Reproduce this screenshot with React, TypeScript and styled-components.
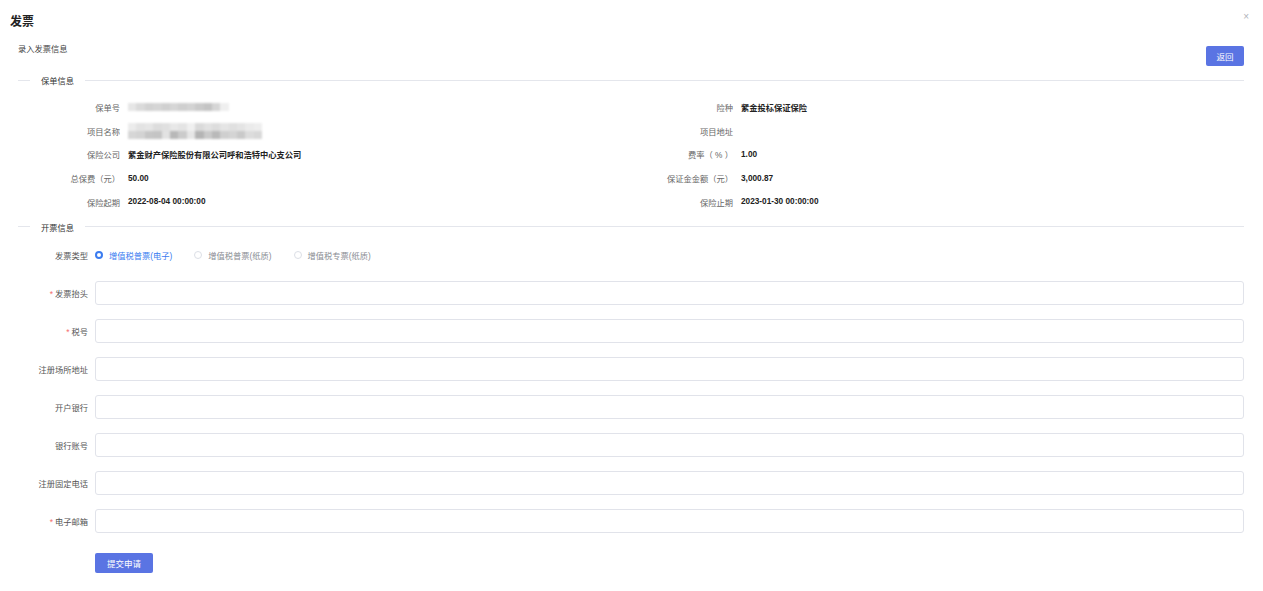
import styled, { createGlobalStyle } from 'styled-components'

const GlobalStyle = createGlobalStyle`
  html, body {
    margin: 0;
    padding: 0;
    background: #fff;
  }
  body {
    font-family: "Liberation Sans", "Noto Sans CJK SC", sans-serif;
    color: #333;
  }
`

const Dialog = styled.div`
  width: 1263px;
  min-height: 591px;
  box-sizing: border-box;
  background: #fff;
`

const Header = styled.div`
  display: flex;
  justify-content: space-between;
  align-items: flex-start;
  padding: 14px 14px 0 10px;
  height: 30px;
  box-sizing: border-box;
`

const Title = styled.div`
  font-size: 12px;
  line-height: 16px;
  font-weight: bold;
  color: #222;
`

const Close = styled.span`
  font-size: 10px;
  line-height: 6px;
  color: #b0b3ba;
  cursor: pointer;
`

const Body = styled.div`
  padding: 0 19px 0 18px;
`

const Toolbar = styled.div`
  display: flex;
  justify-content: space-between;
  align-items: flex-start;
  height: 40px;
  padding-top: 15px;
  box-sizing: border-box;
`

const SubTitle = styled.div`
  font-size: 8.25px;
  line-height: 10px;
  color: #444;
`

const Button = styled.button<{ wide?: boolean }>`
  height: 20px;
  width: ${({ wide }) => (wide ? '58px' : '38px')};
  margin-top: 1px;
  padding: 0;
  border: none;
  border-radius: 2px;
  background: #5a74e3;
  color: #fff;
  font-family: inherit;
  font-size: 8.5px;
  cursor: pointer;
`

const Divider = styled.div<{ top: number }>`
  display: flex;
  align-items: center;
  margin-top: ${({ top }) => top}px;
  height: 10px;
  font-size: 8.25px;
  color: #333;

  &::before {
    content: '';
    width: 12px;
    height: 1px;
    background: #e4e6ec;
  }

  &::after {
    content: '';
    flex: 1;
    height: 1px;
    background: #e4e6ec;
  }
`

const DividerText = styled.span`
  padding: 0 11px;
`

const InfoGrid = styled.div`
  display: grid;
  grid-template-columns: 1fr 1fr;
  grid-auto-rows: 23.75px;
  padding-top: 10px;
`

const InfoItem = styled.div`
  display: flex;
  align-items: center;
  font-size: 8.25px;
`

const InfoLabel = styled.span`
  width: 102px;
  text-align: right;
  color: #666;
  flex-shrink: 0;
`

const InfoValue = styled.span`
  margin-left: 8px;
  font-weight: bold;
  color: #222;
`

const Mosaic = styled.div<{ cols: number }>`
  margin-left: 8px;
  display: grid;
  grid-template-columns: repeat(${({ cols }) => cols}, 8.4px);
  grid-auto-rows: 8px;
  filter: blur(0.8px);
`

const Cell = styled.span<{ shade: string }>`
  background: ${({ shade }) => shade};
`

const FormArea = styled.div`
  padding-top: 17px;
`

const FormRow = styled.div<{ gap: number }>`
  display: flex;
  align-items: center;
  margin-bottom: ${({ gap }) => gap}px;
  font-size: 8.25px;
`

const FormLabel = styled.label`
  width: 70px;
  flex-shrink: 0;
  text-align: right;
  color: #555;
  margin-right: 7px;
`

const Star = styled.span`
  color: #f56c6c;
  margin-right: 2px;
`

const RadioGroup = styled.div`
  display: flex;
  align-items: center;
  gap: 22px;
`

const RadioOption = styled.span<{ checked?: boolean }>`
  display: flex;
  align-items: center;
  gap: 6px;
  color: ${({ checked }) => (checked ? '#3b7cf0' : '#8a8d93')};
`

const RadioDot = styled.span<{ checked?: boolean }>`
  width: 8px;
  height: 8px;
  box-sizing: border-box;
  border-radius: 50%;
  border: ${({ checked }) => (checked ? '2.5px solid #3b7cf0' : '1px solid #dcdfe6')};
  background: #fff;
`

const Input = styled.input`
  flex: 1;
  height: 24px;
  box-sizing: border-box;
  border: 1px solid #e1e3ea;
  border-radius: 3px;
  outline: none;
  padding: 0 8px;
  font-family: inherit;
  font-size: 8.25px;
`

const Footer = styled.div`
  padding: 5px 0 0 77px;
`

const policyNoShades = [
  '#e6e6e6', '#dadada', '#d2d2d2', '#d5d5d5', '#d0d0d0', '#d6d6d6',
  '#cfcfcf', '#d3d3d3', '#cacaca', '#c4c4c4', '#d6d6d6', '#efefef',
]

const projectShades = [
  '#ececec', '#e3e3e3', '#e6e6e6', '#dddddd', '#e0e0e0', '#e8e8e8', '#e4e4e4', '#f0f0f0',
  '#dadada', '#e2e2e2', '#dddddd', '#e5e5e5', '#e0e0e0', '#e4e4e4', '#ebebeb', '#eeeeee',
  '#d6d6d6', '#d3d3d3', '#c6c6c6', '#c4c4c4', '#e2e2e2', '#b8b8b8', '#cbcbcb', '#e6e6e6',
  '#b4b4b4', '#c9c9c9', '#b9b9b9', '#cfcfcf', '#d4d4d4', '#c9c9c9', '#dcdcdc', '#d8d8d8',
]

const infoItems: { label: string; value?: string; shades?: string[]; cols?: number }[] = [
  { label: '保单号', shades: policyNoShades, cols: 12 },
  { label: '险种', value: '紫金投标保证保险' },
  { label: '项目名称', shades: projectShades, cols: 16 },
  { label: '项目地址', value: '' },
  { label: '保险公司', value: '紫金财产保险股份有限公司呼和浩特中心支公司' },
  { label: '费率（ % ）', value: '1.00' },
  { label: '总保费（元）', value: '50.00' },
  { label: '保证金金额（元）', value: '3,000.87' },
  { label: '保险起期', value: '2022-08-04 00:00:00' },
  { label: '保险止期', value: '2023-01-30 00:00:00' },
]

const fields = [
  { label: '发票抬头', required: true },
  { label: '税号', required: true },
  { label: '注册场所地址' },
  { label: '开户银行' },
  { label: '银行账号' },
  { label: '注册固定电话' },
  { label: '电子邮箱', required: true },
]

const invoiceTypes = ['增值税普票(电子)', '增值税普票(纸质)', '增值税专票(纸质)']

export default function App() {
  return (
    <Dialog>
      <GlobalStyle />
      <Header>
        <Title>发票</Title>
        <Close>×</Close>
      </Header>
      <Body>
        <Toolbar>
          <SubTitle>录入发票信息</SubTitle>
          <Button>返回</Button>
        </Toolbar>
        <Divider top={5}>
          <DividerText>保单信息</DividerText>
        </Divider>
        <InfoGrid>
          {infoItems.map((item) => (
            <InfoItem key={item.label}>
              <InfoLabel>{item.label}</InfoLabel>
              {item.shades ? (
                <Mosaic cols={item.cols ?? 12}>
                  {item.shades.map((s, i) => <Cell key={i} shade={s} />)}
                </Mosaic>
              ) : (
                <InfoValue>{item.value}</InfoValue>
              )}
            </InfoItem>
          ))}
        </InfoGrid>
        <Divider top={8}>
          <DividerText>开票信息</DividerText>
        </Divider>
        <FormArea>
          <FormRow gap={20}>
            <FormLabel>发票类型</FormLabel>
            <RadioGroup>
              {invoiceTypes.map((t, i) => (
                <RadioOption key={t} checked={i === 0}>
                  <RadioDot checked={i === 0} />
                  {t}
                </RadioOption>
              ))}
            </RadioGroup>
          </FormRow>
          {fields.map((f) => (
            <FormRow key={f.label} gap={14}>
              <FormLabel>
                {f.required && <Star>*</Star>}
                {f.label}
              </FormLabel>
              <Input />
            </FormRow>
          ))}
        </FormArea>
        <Footer>
          <Button wide>提交申请</Button>
        </Footer>
      </Body>
    </Dialog>
  )
}
